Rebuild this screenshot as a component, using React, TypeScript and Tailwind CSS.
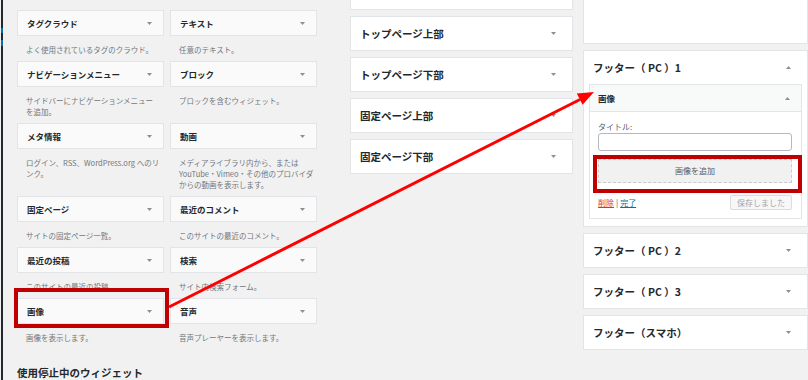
import React from "react";

const FONT = "font-['Noto_Sans_CJK_JP','Liberation_Sans',sans-serif]";

function Caret({ up = false, className = "" }: { up?: boolean; className?: string }) {
  return (
    <svg width="5" height="3" viewBox="0 0 5 3" className={className}>
      {up ? (
        <polygon points="0,3 5,3 2.5,0" fill="#8c8f94" />
      ) : (
        <polygon points="0,0 5,0 2.5,3" fill="#8c8f94" />
      )}
    </svg>
  );
}

type W = { title: string; desc: React.ReactNode };

const widgets: W[] = [
  { title: "タグクラウド", desc: "よく使用されているタグのクラウド。" },
  { title: "テキスト", desc: "任意のテキスト。" },
  {
    title: "ナビゲーションメニュー",
    desc: (
      <>
        サイドバーにナビゲーションメニュー
        <br />
        を追加。
      </>
    ),
  },
  { title: "ブロック", desc: "ブロックを含むウィジェット。" },
  {
    title: "メタ情報",
    desc: (
      <>
        ログイン、RSS、WordPress.org へのリ
        <br />
        ンク。
      </>
    ),
  },
  {
    title: "動画",
    desc: (
      <>
        メディアライブラリ内から、または
        <br />
        YouTube・Vimeo・その他のプロバイダ
        <br />
        からの動画を表示します。
      </>
    ),
  },
  { title: "固定ページ", desc: "サイトの固定ページ一覧。" },
  { title: "最近のコメント", desc: "このサイトの最近のコメント。" },
  { title: "最近の投稿", desc: "このサイトの最近の投稿。" },
  { title: "検索", desc: "サイト内検索フォーム。" },
  { title: "画像", desc: "画像を表示します。" },
  { title: "音声", desc: "音声プレーヤーを表示します。" },
];

function SideCard({ title, up = false }: { title: string; up?: boolean }) {
  return (
    <div className="h-[35px] border border-[#e2e4e7] bg-white flex items-center justify-between pl-[9px] pr-[16px]">
      <span className="text-[10.5px] font-bold text-[#23282d] whitespace-nowrap">{title}</span>
      <Caret up={up} />
    </div>
  );
}

export default function App() {
  return (
    <div className={`${FONT} relative w-[808px] h-[380px] overflow-hidden bg-[#f1f1f1] flex`}>
      {/* left admin strip */}
      <div className="w-[1px] h-full bg-[#f1f1f1]" />
      <div className="w-[2px] h-full bg-[#23282d] flex flex-col">
        <div className="h-[28px]" />
        <div className="h-[5px] bg-[#0073aa]" />
        <div className="h-[7px]" />
        <div className="h-[6px] bg-[#0073aa]" />
      </div>

      {/* available widgets */}
      <div className="ml-[14px] w-[300px] pt-[10px] flex flex-col">
        <div className="grid grid-cols-[147px_147px] gap-x-[6px]">
          {widgets.map((w) => (
            <div key={w.title} className="flex flex-col">
              <div className="h-[26px] border border-[#e2e4e7] bg-[#fafafa] flex items-center justify-between pl-[9px] pr-[11px]">
                <span className="text-[8.5px] font-bold text-[#23282d] whitespace-nowrap">{w.title}</span>
                <Caret />
              </div>
              <div className="pt-[8px] pb-[6px] pl-[9px] text-[7.5px] leading-[11px] text-[#72777c] whitespace-nowrap">
                {w.desc}
              </div>
            </div>
          ))}
        </div>
        <div className="mt-[17px] text-[10.5px] leading-[14px] font-bold text-[#23282d] whitespace-nowrap">
          使用停止中のウィジェット
        </div>
      </div>

      {/* middle sidebars */}
      <div className="ml-[33px] w-[223px] flex flex-col gap-[6px]">
        <div className="h-[10px] border-x border-b border-[#e2e4e7] bg-white" />
        <SideCard title="トップページ上部" />
        <SideCard title="トップページ下部" />
        <SideCard title="固定ページ上部" />
        <SideCard title="固定ページ下部" />
      </div>

      {/* right sidebars */}
      <div className="ml-[10px] w-[225px] flex flex-col gap-[6px]">
        <div className="h-[44px] border-x border-b border-[#e2e4e7] bg-white" />
        <div className="border border-[#e2e4e7] bg-white pb-[7px]">
          <div className="h-[33px] flex items-center justify-between pl-[9px] pr-[16px]">
            <span className="text-[10.5px] font-bold text-[#23282d] whitespace-nowrap">フッター（ PC ）1</span>
            <Caret up />
          </div>
          <div className="mx-[5px] border border-[#e2e4e7]">
            <div className="h-[27px] bg-[#f8f9f9] border-b border-[#e2e4e7] flex items-center justify-between pl-[8px] pr-[11px]">
              <span className="text-[8.5px] font-bold text-[#23282d]">画像</span>
              <Caret up />
            </div>
            <div className="bg-white px-[8px] pt-[9px] pb-[8px] flex flex-col">
              <div className="text-[8px] leading-[12px] text-[#555d66]">タイトル:</div>
              <div className="h-[18px] w-[194px] border border-[#b4b9be] rounded-[3px] bg-white" />
              <div className="mt-[8px] h-[24px] w-[194px] border border-dashed border-[#c8cacc] bg-[#f1f1f1] flex items-center justify-center text-[8px] text-[#555d66]">
                画像を追加
              </div>
              <div className="mt-[12px] h-[15px] w-[194px] flex items-center justify-between">
                <div className="text-[8px] flex items-center gap-[2px]">
                  <span className="text-[#dc3232] underline">削除</span>
                  <span className="text-[#555d66]">|</span>
                  <span className="text-[#0073aa] underline">完了</span>
                </div>
                <div className="h-[15px] px-[6px] border border-[#dcdcde] rounded-[2px] bg-[#f7f7f7] flex items-center text-[8px] text-[#a0a5aa]">
                  保存しました
                </div>
              </div>
            </div>
          </div>
        </div>
        <SideCard title="フッター（ PC ）2" />
        <SideCard title="フッター（ PC ）3" />
        <SideCard title="フッター（スマホ）" />
      </div>

      {/* annotation boxes */}
      <div className="absolute left-[14px] top-[288px] w-[155px] h-[40px] border-4 border-[#c00000]" />
      <div className="absolute left-[593px] top-[155px] w-[209px] h-[38px] border-4 border-[#c00000]" />

      {/* arrow */}
      <svg className="absolute left-0 top-0 pointer-events-none" width="808" height="380" viewBox="0 0 808 380">
        <line x1="169" y1="307" x2="580" y2="99.5" stroke="#ff0000" strokeWidth="3" />
        <polygon points="594,92 582.6,104.8 576.8,93.6" fill="#ff0000" />
      </svg>
    </div>
  );
}
